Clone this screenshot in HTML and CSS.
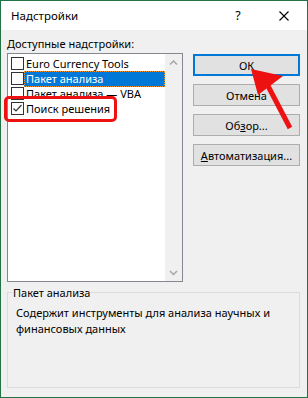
FILE: index.html
```html
<!DOCTYPE html>
<html lang="ru">
<head>
<meta charset="UTF-8">
<meta name="viewport" content="width=device-width, initial-scale=1.0">
<title>Надстройки</title>
<link rel="stylesheet" href="styles.css">
</head>
<body>

<div class="window">
    <div class="titlebar">
        <span class="title">Надстройки</span>
        <span class="caption-btn help">?</span>
        <span class="caption-btn close">
            <svg width="10" height="10" viewBox="0 0 10 10"><path d="M0.5 0.5 L9.5 9.5 M9.5 0.5 L0.5 9.5" stroke="#000" stroke-width="1.1" fill="none"/></svg>
        </span>
    </div>

    <div class="body">
        <div class="main">
            <div class="addins">
                <div class="label"><u>Д</u>оступные надстройки:</div>
                <div class="listbox">
                    <ul class="items">
                        <li><span class="check"></span><span class="name">Euro Currency Tools</span></li>
                        <li class="selected"><span class="check"></span><span class="name">Пакет анализа</span></li>
                        <li><span class="check"></span><span class="name">Пакет анализа — VBA</span></li>
                        <li><span class="check"><svg width="11" height="11" viewBox="0 0 11 11"><path d="M1.5 5.5 L4 8 L9.5 2" stroke="#333" stroke-width="1.2" fill="none"/></svg></span><span class="name">Поиск решения</span></li>
                    </ul>
                    <div class="scrollbar">
                        <svg width="17" height="17" viewBox="0 0 17 17"><path d="M5 10.5 L8.5 7 L12 10.5" stroke="#a6a6a6" stroke-width="1.5" fill="none"/></svg>
                        <svg width="17" height="17" viewBox="0 0 17 17"><path d="M5 7 L8.5 10.5 L12 7" stroke="#a6a6a6" stroke-width="1.5" fill="none"/></svg>
                    </div>
                </div>
            </div>

            <div class="buttons">
                <button class="btn default">ОК</button>
                <button class="btn">Отмена</button>
                <button class="btn">Об<u>з</u>ор...</button>
                <button class="btn"><u>А</u>втоматизация...</button>
            </div>
        </div>

        <fieldset class="group">
            <legend>Пакет анализа</legend>
            <p>Содержит инструменты для анализа научных и<br>финансовых данных</p>
        </fieldset>
    </div>

    <div class="callout"></div>
    <svg class="arrow" width="308" height="398" viewBox="0 0 308 398">
        <path d="M267 84 L290 128" stroke="#ee1111" stroke-width="5" fill="none"/>
        <polygon points="251,69 283,76 258,95" fill="#ee1111"/>
    </svg>
</div>

</body>
</html>
```

FILE: styles.css
```css
body {
    margin: 0;
    padding: 0;
    background-color: #fff;
}
.window {
    position: relative;
    width: 308px;
    height: 398px;
    box-sizing: border-box;
    border: 1px solid #217346;
    background-color: #f0f0f0;
    font-family: 'Noto Sans', sans-serif;
    font-size: 11px;
    color: #000;
    display: flex;
    flex-direction: column;
    overflow: hidden;
}
.titlebar {
    height: 29px;
    flex: none;
    background-color: #fff;
    display: flex;
    align-items: center;
    padding-left: 10px;
}
.title {
    flex: 1;
    font-size: 11.5px;
}
.caption-btn {
    width: 46px;
    height: 29px;
    display: flex;
    align-items: center;
    justify-content: center;
}
.help {
    font-size: 12.5px;
}
.body {
    flex: 1;
    display: flex;
    flex-direction: column;
    padding: 6px 7px 9px 6px;
}
.main {
    display: flex;
    gap: 10px;
}
.addins {
    width: 176px;
}
.label {
    line-height: 15px;
    margin-bottom: 2px;
}
.listbox {
    height: 229px;
    box-sizing: border-box;
    border: 1px solid #828790;
    background-color: #fff;
    display: flex;
}
.items {
    flex: 1;
    list-style-type: none;
    margin: 0;
    padding: 2px 0 0 2px;
}
.items li {
    height: 15px;
    display: flex;
    align-items: center;
}
.check {
    width: 13px;
    height: 13px;
    margin-left: 1px;
    box-sizing: border-box;
    border: 1px solid #333;
    background-color: #fff;
    display: flex;
    align-items: center;
    justify-content: center;
}
.name {
    flex: 1;
    height: 15px;
    line-height: 15px;
    padding-left: 2px;
    white-space: nowrap;
}
.selected .name {
    height: 16px;
    line-height: 16px;
    background-color: #0078d7;
    color: #fff;
    outline: 1px dotted #f7941d;
    outline-offset: -1px;
}
.scrollbar {
    width: 17px;
    background-color: #f0f0f0;
    display: flex;
    flex-direction: column;
    justify-content: space-between;
}
.buttons {
    width: 107px;
    margin-top: 18px;
    display: flex;
    flex-direction: column;
    gap: 8px;
}
.btn {
    height: 22px;
    padding: 0;
    border: 1px solid #adadad;
    background-color: #e1e1e1;
    font-family: inherit;
    font-size: 11px;
    color: #000;
}
.btn.default {
    border: 2px solid #0078d7;
}
.group {
    flex: 1;
    margin: 3px 0 0;
    padding: 0 8px;
    border: 1px solid #dcdcdc;
    min-width: 0;
}
.group legend {
    padding: 0 1px;
    margin-left: -4px;
    line-height: 15px;
}
.group p {
    margin: 5px 0 0;
    line-height: 16px;
    white-space: nowrap;
}
.callout {
    position: absolute;
    left: 3px;
    top: 95px;
    width: 113px;
    height: 26px;
    box-sizing: border-box;
    border: 3px solid #ee1111;
    border-radius: 5px;
}
.arrow {
    position: absolute;
    left: -1px;
    top: -1px;
    pointer-events: none;
}
```
